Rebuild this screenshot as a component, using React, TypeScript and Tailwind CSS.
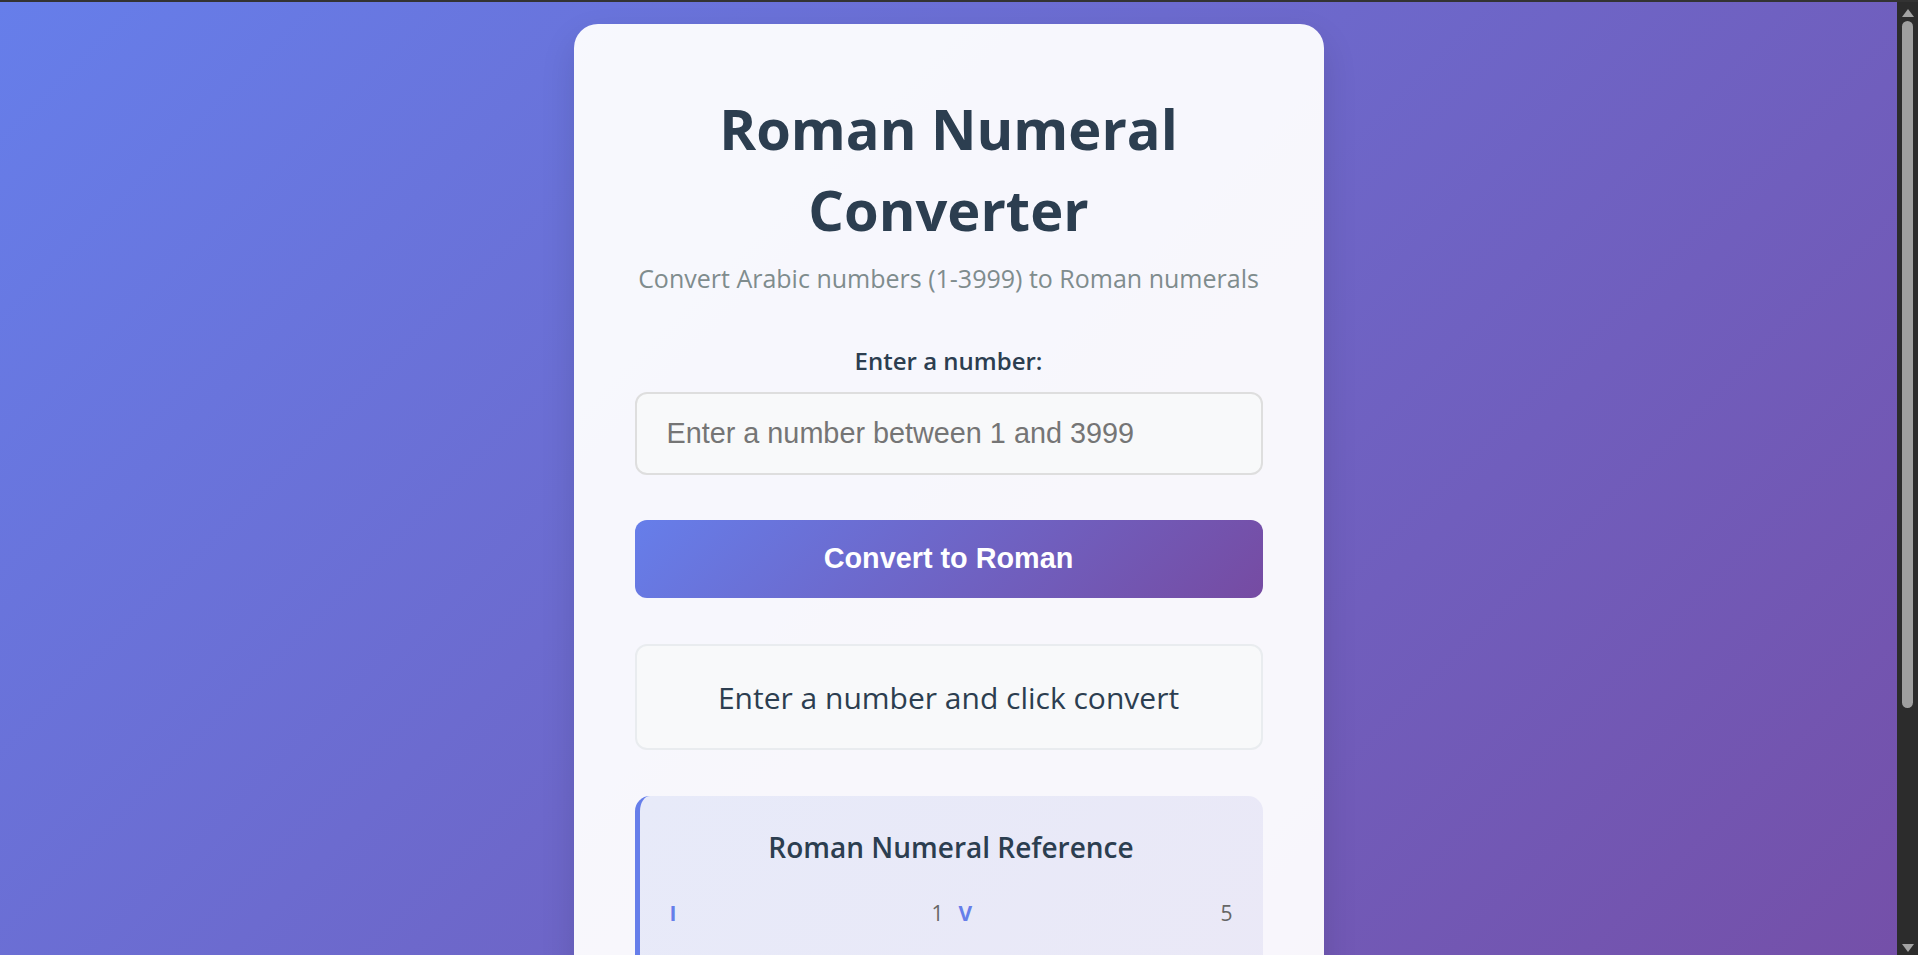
import { useState } from "react";

const numerals: [string, number][] = [
  ["I", 1],
  ["V", 5],
  ["X", 10],
  ["L", 50],
  ["C", 100],
  ["D", 500],
  ["M", 1000],
];

function toRoman(n: number) {
  const table: [string, number][] = [
    ["M", 1000], ["CM", 900], ["D", 500], ["CD", 400],
    ["C", 100], ["XC", 90], ["L", 50], ["XL", 40],
    ["X", 10], ["IX", 9], ["V", 5], ["IV", 4], ["I", 1],
  ];
  let out = "";
  for (const [s, v] of table) {
    while (n >= v) {
      out += s;
      n -= v;
    }
  }
  return out;
}

export default function App() {
  const [value, setValue] = useState("");
  const [result, setResult] = useState("Enter a number and click convert");

  const convert = () => {
    const n = parseInt(value, 10);
    if (isNaN(n) || n < 1 || n > 3999) {
      setResult("Please enter a number between 1 and 3999");
      return;
    }
    setResult(toRoman(n));
  };

  return (
    <div className="h-screen flex flex-col bg-[#2c2c2c] font-['Open_Sans',sans-serif]">
      <div className="h-[2px] bg-[#333] shrink-0" />
      <div className="flex flex-1 min-h-0">
        <div className="flex-1 overflow-y-scroll [scrollbar-width:none]">
          <div className="min-h-full bg-[linear-gradient(135deg,#667eea_0%,#764ba2_100%)] pt-[22px] pb-[20px]">
            <div className="mx-auto w-[750px] rounded-[24px] bg-white/95 px-[61px] pt-[64px] pb-[60px] shadow-[0_15px_35px_rgba(0,0,0,0.12)]">
              <h1 className="text-center text-[56px] leading-[81px] font-bold text-[#2c3e50]">
                Roman Numeral
                <br />
                Converter
              </h1>
              <p className="mt-[11px] text-center text-[25px] leading-[34px] text-[#7f8c8d]">
                Convert Arabic numbers (1-3999) to Roman numerals
              </p>

              <label
                htmlFor="num"
                className="mt-[49px] block text-center text-[24px] leading-[34px] font-semibold text-[#2c3e50]"
              >
                Enter a number:
              </label>
              <input
                id="num"
                type="number"
                value={value}
                onChange={(e) => setValue(e.target.value)}
                placeholder="Enter a number between 1 and 3999"
                className="mt-[14px] block h-[83px] w-full rounded-[12px] border-2 border-[#dedede] bg-[#f8f9fa] px-[30px] font-['Liberation_Sans',Arial,sans-serif] text-[28.8px] text-[#333] placeholder:text-[#757575] outline-none"
              />

              <button
                onClick={convert}
                className="mt-[45px] block h-[78px] w-full rounded-[12px] bg-[linear-gradient(135deg,#667eea_0%,#764ba2_100%)] font-['Liberation_Sans',Arial,sans-serif] text-[28.8px] font-bold text-white"
              >
                Convert to Roman
              </button>

              <div className="mt-[46px] flex h-[106px] items-center justify-center rounded-[12px] border-2 border-[#e9ecef] bg-[#f8f9fa] text-[30px] text-[#2c3e50]">
                {result}
              </div>

              <div className="mt-[46px] rounded-[15px] border-l-[5px] border-[#667eea] bg-[linear-gradient(135deg,#e7eaf9_0%,#ebe8f6_100%)] pl-[30px] pr-[30px] pt-[32px] pb-[30px]">
                <h3 className="text-center text-[28px] leading-[38px] font-semibold text-[#2c3e50]">
                  Roman Numeral Reference
                </h3>
                <div className="mt-[20px] grid grid-cols-2 gap-x-[15px] gap-y-[12px]">
                  {numerals.map(([s, v]) => (
                    <div key={s} className="flex items-center justify-between py-[12px] text-[21px] leading-[30px]">
                      <span className="font-bold text-[#667eea]">{s}</span>
                      <span className="text-[#666]">{v}</span>
                    </div>
                  ))}
                </div>
              </div>
            </div>
          </div>
        </div>

        {/* scrollbar */}
        <div className="w-[21px] shrink-0 bg-[#2c2c2c] flex flex-col items-center">
          <div className="mt-[7px] h-0 w-0 border-x-[6px] border-b-[8px] border-x-transparent border-b-[#a3a3a3]" />
          <div className="mt-[4px] h-[687px] w-[11px] rounded-full bg-[#9f9f9f]" />
          <div className="flex-1" />
          <div className="mb-[3px] h-0 w-0 border-x-[6px] border-t-[8px] border-x-transparent border-t-[#a3a3a3]" />
        </div>
      </div>
    </div>
  );
}
